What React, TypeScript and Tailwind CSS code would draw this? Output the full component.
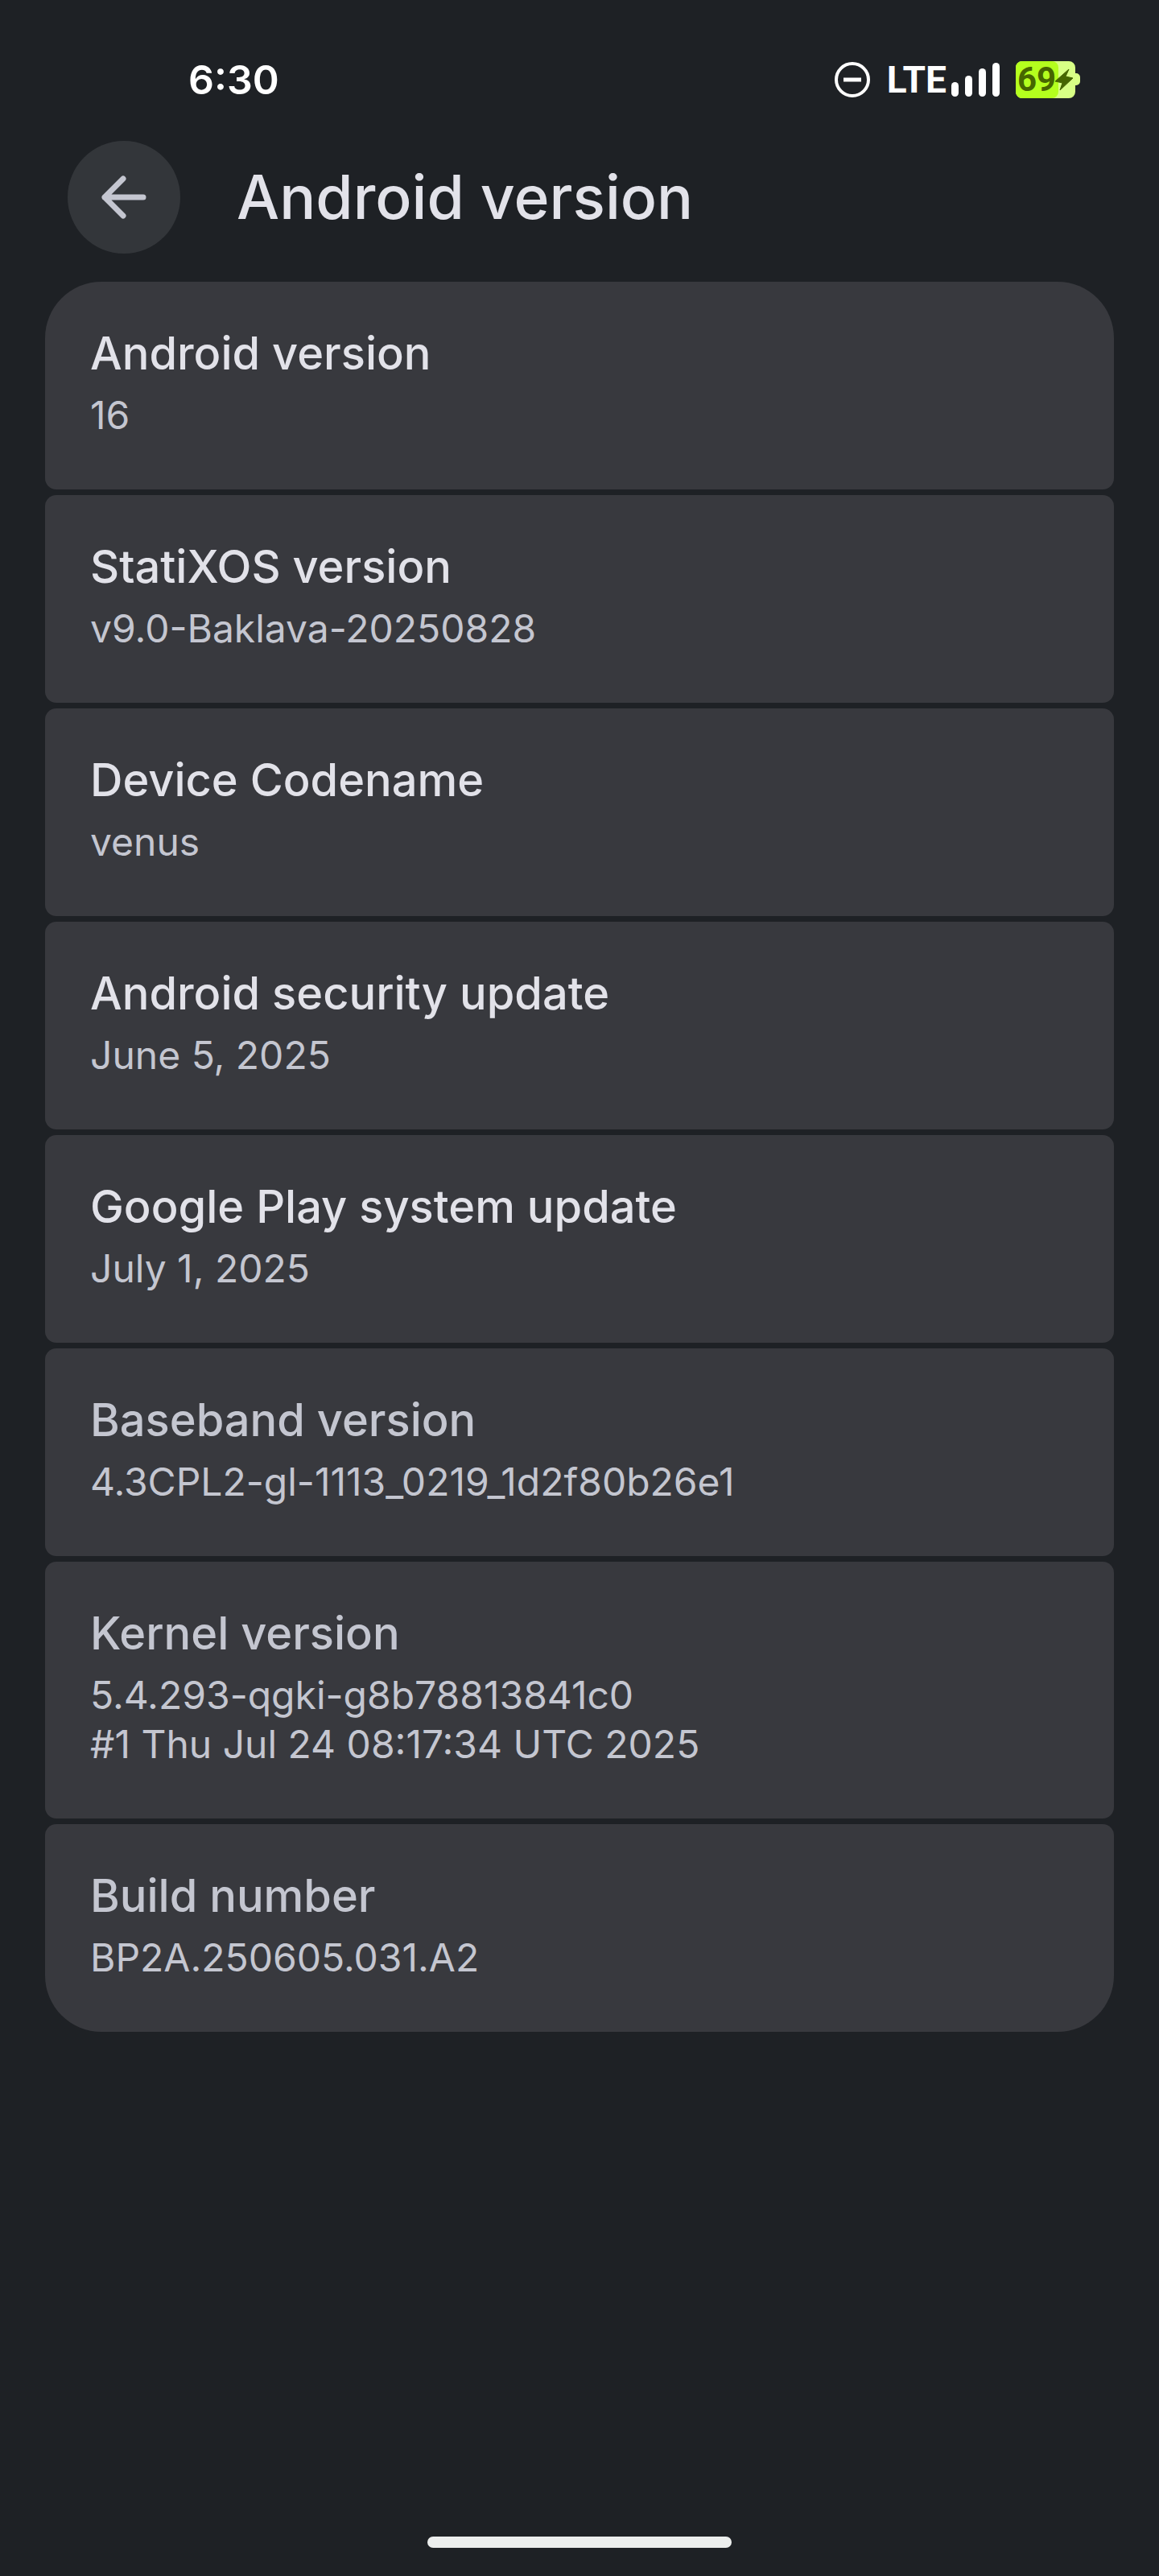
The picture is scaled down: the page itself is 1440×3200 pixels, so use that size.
const ROWS = [
  { title: 'Android version', lines: ['16'], enabled: true },
  { title: 'StatiXOS version', lines: ['v9.0-Baklava-20250828'], enabled: true },
  { title: 'Device Codename', lines: ['venus'], enabled: true },
  { title: 'Android security update', lines: ['June 5, 2025'], enabled: true },
  { title: 'Google Play system update', lines: ['July 1, 2025'], enabled: true },
  { title: 'Baseband version', lines: ['4.3CPL2-gl-1113_0219_1d2f80b26e1'], enabled: false },
  {
    title: 'Kernel version',
    lines: ['5.4.293-qgki-g8b78813841c0', '#1 Thu Jul 24 08:17:34 UTC 2025'],
    enabled: false,
  },
  { title: 'Build number', lines: ['BP2A.250605.031.A2'], enabled: false },
];

function DoNotDisturbIcon() {
  return (
    <svg viewBox="0 0 46 46" className="w-[46px] h-[46px]" fill="none" stroke="#fff" aria-hidden="true">
      <circle cx="23" cy="23" r="20" strokeWidth="4" />
      <path d="M12 23h22" strokeWidth="5" />
    </svg>
  );
}

function SignalIcon() {
  return (
    <svg viewBox="0 0 60 42" className="w-[60px] h-[42px]" fill="#fff" aria-hidden="true">
      <rect x="0" y="24" width="9" height="18" rx="4.5" />
      <rect x="17" y="16" width="9" height="26" rx="4.5" />
      <rect x="34" y="7" width="9" height="35" rx="4.5" />
      <rect x="51" y="0" width="9" height="42" rx="4.5" />
    </svg>
  );
}

function Battery({ level }: { level: number }) {
  return (
    <div className="relative w-20 h-[46px]">
      <svg viewBox="0 0 80 46" className="w-20 h-[46px]" aria-hidden="true">
        <path
          d="M8 0H66a8 8 0 0 1 8 8v7h1a5 5 0 0 1 5 5v5a5 5 0 0 1-5 5h-1v8a8 8 0 0 1-8 8H8a8 8 0 0 1-8-8V8a8 8 0 0 1 8-8Z"
          fill="#d8ff85"
        />
        <path d="M8 0H45a8 8 0 0 1 8 8v30a8 8 0 0 1-8 8H8a8 8 0 0 1-8-8V8a8 8 0 0 1 8-8Z" fill="#b4ff1e" />
        <path
          d="M66 10 49 25l9 2-3 9 16-15-9-2Z"
          fill="#466600"
          stroke="#466600"
          strokeWidth="1"
          strokeLinejoin="round"
        />
      </svg>
      <span className="absolute inset-y-0 left-[2px] font-['Roboto',sans-serif] text-[42px] leading-[46px] font-bold text-[#466600]">
        {level}
      </span>
    </div>
  );
}

function StatusBar() {
  return (
    <div className="flex items-center justify-between pt-[64px] pl-[234px] pr-[98px] text-white">
      <time className="text-[50px] leading-[70px] font-semibold">6:30</time>
      <div className="flex items-center">
        <DoNotDisturbIcon />
        <span className="ml-5 mr-[6px] font-['Roboto',sans-serif] text-[46px] leading-[46px] font-bold">LTE</span>
        <SignalIcon />
        <div className="ml-5">
          <Battery level={69} />
        </div>
      </div>
    </div>
  );
}

export default function App() {
  return (
    <div className="flex min-h-screen flex-col bg-[#1e2125] font-['Inter',sans-serif]">
      <StatusBar />

      <header className="flex items-center gap-[70px] px-[84px] pt-[41px]">
        <button
          type="button"
          aria-label="Navigate up"
          className="flex size-[140px] shrink-0 items-center justify-center rounded-full bg-[#33363a]"
        >
          <svg viewBox="0 0 56 56" className="size-14" fill="none" stroke="#c4c6d0" strokeWidth="7" aria-hidden="true">
            <path d="M27 5 4 28l23 23M4 28h48" strokeLinecap="round" strokeLinejoin="round" />
          </svg>
        </button>
        <h1 className="text-[75px] leading-[96px] font-medium text-[#e2e2e9]">Android version</h1>
      </header>

      <main className="px-14 pt-[35px]">
        <dl className="flex flex-col gap-[7px]">
          {ROWS.map((row) => (
            <div
              key={row.title}
              className="rounded-[14px] bg-[#38393e] px-14 pt-[54px] pb-[62px] first:rounded-t-[70px] last:rounded-b-[70px]"
            >
              <dt
                className={`text-[56px] leading-[70px] font-medium ${
                  row.enabled ? 'text-[#e2e2e9]' : 'text-[#c4c6d0]'
                }`}
              >
                {row.title}
              </dt>
              <dd className="mt-[11px] text-[48px] leading-[61px] text-[#c4c6d0]">
                {row.lines.map((line) => (
                  <span key={line} className="block">
                    {line}
                  </span>
                ))}
              </dd>
            </div>
          ))}
        </dl>
      </main>

      <div className="mx-auto mt-auto mb-[35px] h-[14px] w-[378px] rounded-full bg-[#eceeed]" />
    </div>
  );
}
